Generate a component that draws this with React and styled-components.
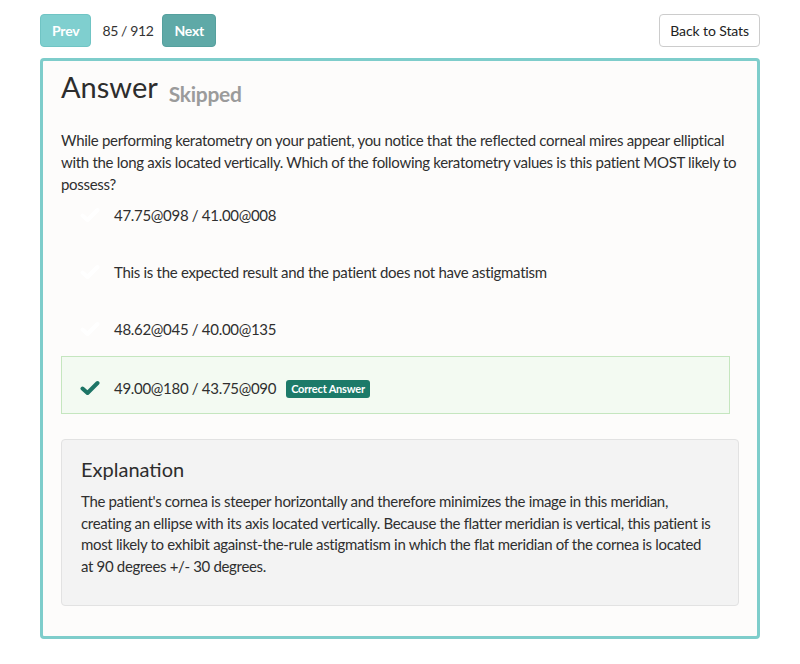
import React from 'react';
import styled, { createGlobalStyle } from 'styled-components';

const GlobalStyle = createGlobalStyle`
  * { box-sizing: border-box; }
  body {
    margin: 0;
    background: #ffffff;
    font-family: Lato, "Open Sans", sans-serif;
    color: #333333;
  }
`;

const Page = styled.div`
  padding: 14px 40px 24px 40px;
  width: 800px;
`;

const TopBar = styled.div`
  display: flex;
  align-items: center;
  height: 33px;
  margin-bottom: 11px;
`;

const NavButton = styled.button`
  height: 33px;
  padding: 0 11px;
  border-radius: 4px;
  border: 1px solid ${p => p.$dim ? '#70c4c4' : '#55a09e'};
  background: ${p => p.$dim ? '#7fcfcf' : '#5fa9a7'};
  color: #ffffff;
  font-family: inherit;
  font-weight: 700;
  font-size: 14px;
  letter-spacing: -0.2px;
  cursor: pointer;
`;

const Counter = styled.span`
  font-size: 14px;
  letter-spacing: -0.4px;
  margin: 0 9px 0 11px;
  color: #333;
`;

const BackButton = styled.button`
  margin-left: auto;
  height: 33px;
  padding: 0 10px;
  border-radius: 4px;
  border: 1px solid #cccccc;
  background: #ffffff;
  color: #222;
  font-family: inherit;
  font-size: 14px;
  letter-spacing: -0.1px;
`;

const Card = styled.div`
  border: 3px solid #7ecdcb;
  border-radius: 4px;
  background: #fdfcfb;
  padding: 6px 18px 30px 18px;
`;

const TitleRow = styled.div`
  display: flex;
  align-items: baseline;
  gap: 11px;
  margin-bottom: 22px;
`;

const Title = styled.h2`
  margin: 0;
  font-size: 29px;
  font-weight: 400;
  line-height: 40px;
  color: #2d2d2d;
`;

const Status = styled.span`
  font-size: 21px;
  font-weight: 700;
  color: #9b9b9b;
  letter-spacing: -0.3px;
  position: relative;
  top: 4px;
`;

const Question = styled.p`
  margin: 0;
  font-size: 15px;
  line-height: 22px;
  letter-spacing: -0.3px;
  color: #2f2f2f;
`;

const OptionList = styled.div`
  display: flex;
  flex-direction: column;
  margin-right: 9px;
`;

const Option = styled.div`
  display: flex;
  align-items: center;
  gap: 14px;
  margin-top: ${p => p.$correct ? 7 : 17}px;
  padding: ${p => p.$correct ? '20px 18px 14px' : '8px 18px'};
  border: 1px solid ${p => p.$correct ? '#c5e6bf' : 'transparent'};
  background: ${p => p.$correct ? '#f3faf2' : 'transparent'};
  font-size: 15px;
  line-height: 22px;
  letter-spacing: -0.3px;
  color: #2f2f2f;
  &:first-child { margin-top: 0; }
`;

const CheckMark = styled.svg`
  width: 20px;
  height: 16px;
  flex: none;
  color: ${p => p.$on ? '#1d7566' : '#ffffff'};
`;

const Badge = styled.span`
  display: inline-block;
  margin-left: 10px;
  padding: 0 5px;
  line-height: 18px;
  border-radius: 3px;
  background: #1c7a69;
  color: #fff;
  font-size: 11px;
  font-weight: 700;
  letter-spacing: -0.2px;
  vertical-align: 1px;
`;

const Explanation = styled.div`
  margin-top: 25px;
  border: 1px solid #e2e2e2;
  border-radius: 4px;
  background: #f3f3f3;
  padding: 15px 22px 27px 19px;
`;

const ExplanationTitle = styled.h3`
  margin: 0 0 8px 0;
  font-size: 20px;
  font-weight: 400;
  line-height: 28px;
  color: #2d2d2d;
`;

const ExplanationText = styled.p`
  margin: 0;
  font-size: 15px;
  line-height: 21.7px;
  letter-spacing: -0.33px;
  color: #2f2f2f;
`;

const Check = ({ on }) => (
  <CheckMark $on={on} viewBox="0 0 20 16">
    <polyline
      points="2.5,8.5 7.5,13 17.5,3"
      fill="none"
      stroke="currentColor"
      strokeWidth="4"
      strokeLinecap="round"
      strokeLinejoin="round"
    />
  </CheckMark>
);

const options = [
  { text: '47.75@098 / 41.00@008' },
  { text: 'This is the expected result and the patient does not have astigmatism' },
  { text: '48.62@045 / 40.00@135' },
  { text: '49.00@180 / 43.75@090', correct: true },
];

export default function App() {
  return (
    <Page>
      <GlobalStyle />
      <TopBar>
        <NavButton $dim>Prev</NavButton>
        <Counter>85 / 912</Counter>
        <NavButton>Next</NavButton>
        <BackButton>Back to Stats</BackButton>
      </TopBar>
      <Card>
        <TitleRow>
          <Title>Answer</Title>
          <Status>Skipped</Status>
        </TitleRow>
        <Question>
          While performing keratometry on your patient, you notice that the reflected corneal mires appear elliptical
          with the long axis located vertically. Which of the following keratometry values is this patient MOST likely to
          possess?
        </Question>
        <OptionList>
          {options.map(o => (
            <Option key={o.text} $correct={o.correct}>
              <Check on={o.correct} />
              <span>
                {o.text}
                {o.correct && <Badge>Correct Answer</Badge>}
              </span>
            </Option>
          ))}
        </OptionList>
        <Explanation>
          <ExplanationTitle>Explanation</ExplanationTitle>
          <ExplanationText>
            The patient's cornea is steeper horizontally and therefore minimizes the image in this meridian,
            creating an ellipse with its axis located vertically. Because the flatter meridian is vertical, this patient is
            most likely to exhibit against-the-rule astigmatism in which the flat meridian of the cornea is located
            at 90 degrees +/- 30 degrees.
          </ExplanationText>
        </Explanation>
      </Card>
    </Page>
  );
}
